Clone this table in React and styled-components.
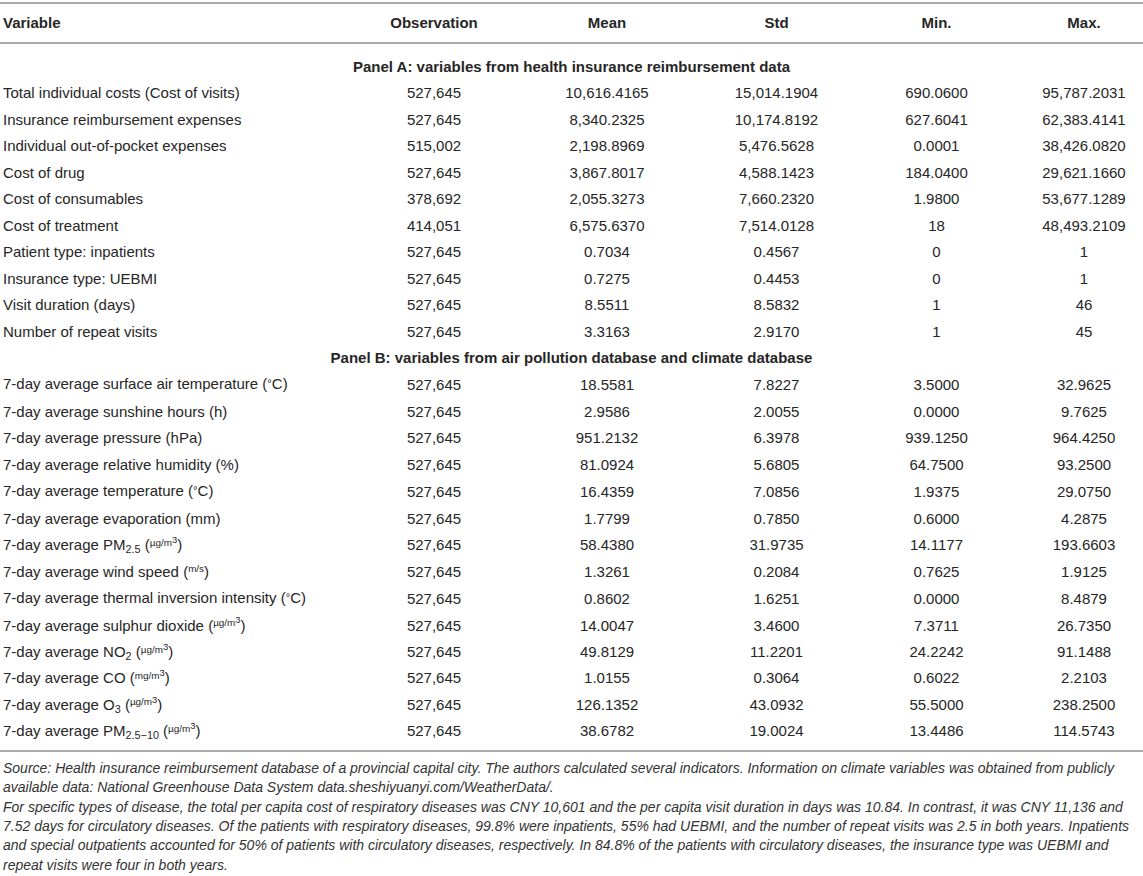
import styled, { createGlobalStyle } from "styled-components";

const GlobalStyle = createGlobalStyle`
  html, body {
    margin: 0;
    padding: 0;
    background: #fff;
    overflow: hidden;
  }
  body {
    font-family: "Liberation Sans", Arial, sans-serif;
    color: #2b2b2b;
  }
`;

const Sub = ({ children }) => <SubText>{children}</SubText>;
const Unit = ({ children }) => (
  <>
    (<SupText>{children}</SupText>)
  </>
);
const Ugm3 = () => (
  <Unit>
    µg/m<Cube>3</Cube>
  </Unit>
);
const Mgm3 = () => (
  <Unit>
    mg/m<Cube>3</Cube>
  </Unit>
);
const Deg = () => (
  <>
    (<DegSign>°</DegSign>C)
  </>
);

const panelA = [
  ["Total individual costs (Cost of visits)", "527,645", "10,616.4165", "15,014.1904", "690.0600", "95,787.2031"],
  ["Insurance reimbursement expenses", "527,645", "8,340.2325", "10,174.8192", "627.6041", "62,383.4141"],
  ["Individual out-of-pocket expenses", "515,002", "2,198.8969", "5,476.5628", "0.0001", "38,426.0820"],
  ["Cost of drug", "527,645", "3,867.8017", "4,588.1423", "184.0400", "29,621.1660"],
  ["Cost of consumables", "378,692", "2,055.3273", "7,660.2320", "1.9800", "53,677.1289"],
  ["Cost of treatment", "414,051", "6,575.6370", "7,514.0128", "18", "48,493.2109"],
  ["Patient type: inpatients", "527,645", "0.7034", "0.4567", "0", "1"],
  ["Insurance type: UEBMI", "527,645", "0.7275", "0.4453", "0", "1"],
  ["Visit duration (days)", "527,645", "8.5511", "8.5832", "1", "46"],
  ["Number of repeat visits", "527,645", "3.3163", "2.9170", "1", "45"],
];

const panelB = [
  [<>7-day average surface air temperature <Deg /></>, "527,645", "18.5581", "7.8227", "3.5000", "32.9625"],
  ["7-day average sunshine hours (h)", "527,645", "2.9586", "2.0055", "0.0000", "9.7625"],
  ["7-day average pressure (hPa)", "527,645", "951.2132", "6.3978", "939.1250", "964.4250"],
  ["7-day average relative humidity (%)", "527,645", "81.0924", "5.6805", "64.7500", "93.2500"],
  [<>7-day average temperature <Deg /></>, "527,645", "16.4359", "7.0856", "1.9375", "29.0750"],
  ["7-day average evaporation (mm)", "527,645", "1.7799", "0.7850", "0.6000", "4.2875"],
  [<>7-day average PM<Sub>2.5</Sub> <Ugm3 /></>, "527,645", "58.4380", "31.9735", "14.1177", "193.6603"],
  [<>7-day average wind speed <Unit>m/s</Unit></>, "527,645", "1.3261", "0.2084", "0.7625", "1.9125"],
  [<>7-day average thermal inversion intensity <Deg /></>, "527,645", "0.8602", "1.6251", "0.0000", "8.4879"],
  [<>7-day average sulphur dioxide <Ugm3 /></>, "527,645", "14.0047", "3.4600", "7.3711", "26.7350"],
  [<>7-day average NO<Sub>2</Sub> <Ugm3 /></>, "527,645", "49.8129", "11.2201", "24.2242", "91.1488"],
  [<>7-day average CO <Mgm3 /></>, "527,645", "1.0155", "0.3064", "0.6022", "2.2103"],
  [<>7-day average O<Sub>3</Sub> <Ugm3 /></>, "527,645", "126.1352", "43.0932", "55.5000", "238.2500"],
  [<>7-day average PM<Sub>2.5−10</Sub> <Ugm3 /></>, "527,645", "38.6782", "19.0024", "13.4486", "114.5743"],
];

const notes = [
  [
    "Source: Health insurance reimbursement database of a provincial capital city. The authors calculated several indicators. Information on climate variables was obtained from publicly",
    "available data: National Greenhouse Data System data.sheshiyuanyi.com/WeatherData/.",
  ],
  [
    "For specific types of disease, the total per capita cost of respiratory diseases was CNY 10,601 and the per capita visit duration in days was 10.84. In contrast, it was CNY 11,136 and",
    "7.52 days for circulatory diseases. Of the patients with respiratory diseases, 99.8% were inpatients, 55% had UEBMI, and the number of repeat visits was 2.5 in both years. Inpatients",
    "and special outpatients accounted for 50% of patients with circulatory diseases, respectively. In 84.8% of the patients with circulatory diseases, the insurance type was UEBMI and",
    "repeat visits were four in both years.",
  ],
];

function DataRows({ rows }) {
  return rows.map((r, i) => (
    <tr key={i}>
      <NameCell>{r[0]}</NameCell>
      {r.slice(1).map((v, j) => (
        <NumCell key={j} $last={j === 4}>
          {v}
        </NumCell>
      ))}
    </tr>
  ));
}

function App() {
  return (
    <Page>
      <GlobalStyle />
      <Table>
        <colgroup>
          <col style={{ width: 347 }} />
          <col style={{ width: 174 }} />
          <col style={{ width: 172 }} />
          <col style={{ width: 167 }} />
          <col style={{ width: 153 }} />
          <col style={{ width: 130 }} />
        </colgroup>
        <thead>
          <tr>
            <HeadCell $left>Variable</HeadCell>
            <HeadCell>Observation</HeadCell>
            <HeadCell>Mean</HeadCell>
            <HeadCell>Std</HeadCell>
            <HeadCell>Min.</HeadCell>
            <HeadCell $last>Max.</HeadCell>
          </tr>
        </thead>
        <tbody>
          <tr>
            <PanelCell colSpan={6} $first>
              Panel A: variables from health insurance reimbursement data
            </PanelCell>
          </tr>
          <DataRows rows={panelA} />
          <tr>
            <PanelCell colSpan={6}>
              Panel B: variables from air pollution database and climate database
            </PanelCell>
          </tr>
          <DataRows rows={panelB} />
          <tr>
            <EndCell colSpan={6} />
          </tr>
        </tbody>
      </Table>
      <Footnotes>
        {notes.map((lines, i) => (
          <Note key={i}>
            {lines.map((l, j) => (
              <span key={j}>
                {l}
                {j < lines.length - 1 && <br />}
              </span>
            ))}
          </Note>
        ))}
      </Footnotes>
    </Page>
  );
}

export default App;

const Page = styled.div`
  width: 1143px;
  padding-top: 2px;
`;

const Table = styled.table`
  width: 1143px;
  table-layout: fixed;
  border-collapse: collapse;
  font-size: 15px;
  color: #262626;
`;

const HeadCell = styled.th`
  border-top: 2px solid #ababab;
  border-bottom: 2px solid #ababab;
  font-weight: bold;
  height: 38px;
  line-height: 38px;
  padding: 0;
  padding-left: ${(p) => (p.$left ? "3px" : p.$last ? "12px" : "0")};
  text-align: ${(p) => (p.$left ? "left" : "center")};
  white-space: nowrap;
`;

const PanelCell = styled.td`
  font-weight: bold;
  text-align: center;
  line-height: 26.45px;
  padding: ${(p) => (p.$first ? "10px 0 0" : "0")};
`;

const NameCell = styled.td`
  line-height: 26.45px;
  height: 26.45px;
  padding: 0 0 0 3px;
  white-space: nowrap;
`;

const NumCell = styled.td`
  line-height: 26.45px;
  padding: 0 0 0 ${(p) => (p.$last ? "12px" : "0")};
  text-align: center;
  white-space: nowrap;
`;

const EndCell = styled.td`
  height: 5px;
  padding: 0;
  border-bottom: 2px solid #ababab;
`;

const SubText = styled.span`
  font-size: 0.72em;
  position: relative;
  top: 0.28em;
  line-height: 0;
`;

const SupText = styled.span`
  font-size: 0.66em;
  position: relative;
  top: -0.45em;
  line-height: 0;
`;

const Cube = styled.span`
  font-size: 0.95em;
  position: relative;
  top: -0.3em;
`;

const DegSign = styled.span`
  font-size: 0.75em;
  position: relative;
  top: -0.2em;
`;

const Footnotes = styled.div`
  padding: 7px 0 0 3px;
  font-style: italic;
  font-size: 14px;
  line-height: 19.4px;
  color: #333;
  white-space: nowrap;
`;

const Note = styled.div``;
